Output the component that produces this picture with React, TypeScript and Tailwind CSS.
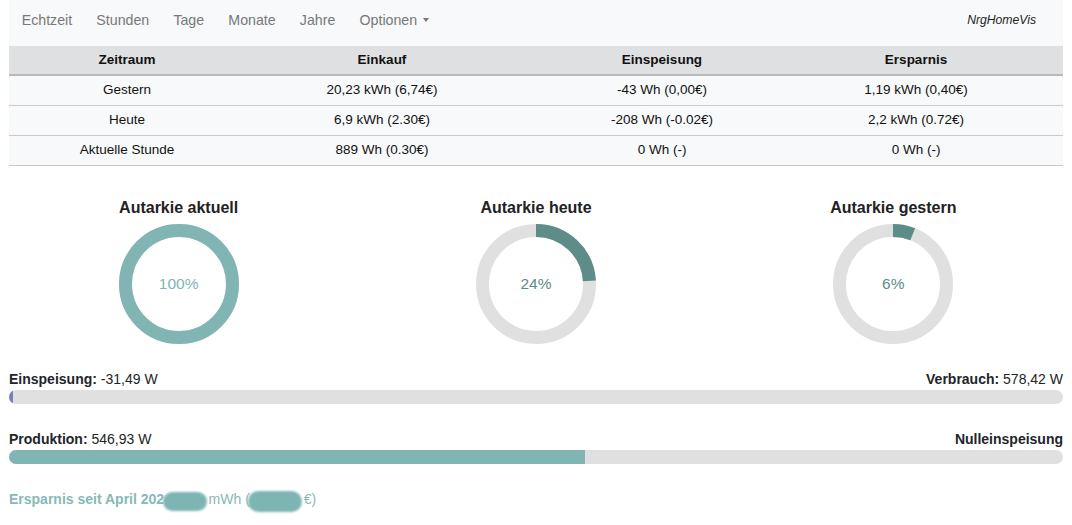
import React from 'react';

const navItems = ['Echtzeit', 'Stunden', 'Tage', 'Monate', 'Jahre'];

const rows = [
  { label: 'Gestern', einkauf: '20,23 kWh (6,74€)', einspeisung: '-43 Wh (0,00€)', ersparnis: '1,19 kWh (0,40€)' },
  { label: 'Heute', einkauf: '6,9 kWh (2.30€)', einspeisung: '-208 Wh (-0.02€)', ersparnis: '2,2 kWh (0.72€)' },
  { label: 'Aktuelle Stunde', einkauf: '889 Wh (0.30€)', einspeisung: '0 Wh (-)', ersparnis: '0 Wh (-)' },
];

const donuts = [
  { title: 'Autarkie aktuell', value: 100, color: '#80b5b4' },
  { title: 'Autarkie heute', value: 24, color: '#5e8c89' },
  { title: 'Autarkie gestern', value: 6, color: '#5e8c89' },
];

const Donut: React.FC<{ value: number; color: string }> = ({ value, color }) => {
  const r = 53.5;
  const c = 2 * Math.PI * r;
  return (
    <div className="relative w-[120px] h-[120px]">
      <svg width="120" height="120" viewBox="0 0 120 120">
        <circle cx="60" cy="60" r={r} fill="none" stroke="#e0e0e0" strokeWidth="13" />
        <circle
          cx="60"
          cy="60"
          r={r}
          fill="none"
          stroke={color}
          strokeWidth="13"
          strokeDasharray={`${(c * value) / 100} ${c}`}
          transform="rotate(-90 60 60)"
        />
      </svg>
      <div className="absolute inset-0 flex items-center justify-center text-[15.5px]" style={{ color }}>
        {value}%
      </div>
    </div>
  );
};

const App: React.FC = () => {
  const produktion = 546.93;
  return (
    <div className="bg-white min-h-[525px] font-['Liberation_Sans',Arial,sans-serif] text-[#212529]">
      <div className="mx-[9px] bg-[#f8f9fa]">
        {/* Navbar */}
        <nav className="h-[46px] flex items-center justify-between pl-[12.7px] pr-[27px] pb-[5px]">
          <div className="flex items-center gap-[24.2px] text-[14.2px] text-[#777879]">
            {navItems.map((item) => (
              <span key={item}>{item}</span>
            ))}
            <span className="flex items-center">
              Optionen
              <span className="ml-[6px] inline-block w-0 h-0 border-l-[3.5px] border-r-[3.5px] border-t-[4px] border-l-transparent border-r-transparent border-t-[#777879]" />
            </span>
          </div>
          <span className="italic text-[12.2px] text-[#222]">NrgHomeVis</span>
        </nav>

        {/* Table */}
        <div className="text-[13.5px]">
          <div className="grid grid-cols-[236px_274px_286px_1fr] h-[30px] items-center bg-[#dfe0e1] border-b-2 border-[#b8b8b8] font-bold text-[#111]">
            <div className="text-center">Zeitraum</div>
            <div className="text-center">Einkauf</div>
            <div className="text-center">Einspeisung</div>
            <div className="text-center pr-[36px]">Ersparnis</div>
          </div>
          {rows.map((row) => (
            <div key={row.label} className="grid grid-cols-[236px_274px_286px_1fr] h-[30px] items-center border-b border-[#cacaca] text-[#111]">
              <div className="text-center">{row.label}</div>
              <div className="text-center">{row.einkauf}</div>
              <div className="text-center">{row.einspeisung}</div>
              <div className="text-center pr-[36px]">{row.ersparnis}</div>
            </div>
          ))}
        </div>
      </div>

      {/* Donuts */}
      <div className="grid grid-cols-3 mt-[32px]">
        {donuts.map((d) => (
          <div key={d.title} className="flex flex-col items-center">
            <h3 className="h-[20px] leading-[20px] text-[16px] font-bold text-[#222] mb-[6px]">{d.title}</h3>
            <Donut value={d.value} color={d.color} />
          </div>
        ))}
      </div>

      {/* Bars */}
      <div className="mx-[9px] mt-[25px] text-[14px]">
        <div className="flex justify-between h-[21px] leading-[21px]">
          <span><b>Einspeisung:</b> -31,49 W</span>
          <span><b>Verbrauch:</b> 578,42 W</span>
        </div>
        <div className="h-[14px] rounded-full bg-[#e0e0e0] overflow-hidden">
          <div className="h-full w-[4px] bg-[#7a7ebf]" />
        </div>

        <div className="flex justify-between h-[21px] leading-[21px] mt-[25px]">
          <span><b>Produktion:</b> 546,93 W</span>
          <b>Nulleinspeisung</b>
        </div>
        <div className="h-[14px] rounded-full bg-[#e0e0e0] overflow-hidden">
          <div className="h-full bg-[#80b5b4]" style={{ width: `${(produktion / 1000) * 100}%` }} />
        </div>

        <div className="mt-[25px] h-[21px] leading-[21px] text-[#86b9b8] whitespace-nowrap">
          <b>Ersparnis seit April 202</b>
          <span className="relative inline-block w-[44.5px] h-[21px] align-top">
            <span className="absolute left-[-1px] top-[3px] w-[44px] h-[19px] rounded-full bg-[#7db5b3] blur-[1px]" />
          </span>
          mWh (
          <span className="relative inline-block w-[54px] h-[21px] align-top">
            <span className="absolute left-[-2px] top-[2px] w-[54px] h-[21px] rounded-full bg-[#7db5b3] blur-[1px]" />
          </span>
          €)
        </div>
      </div>
    </div>
  );
};

export default App;
